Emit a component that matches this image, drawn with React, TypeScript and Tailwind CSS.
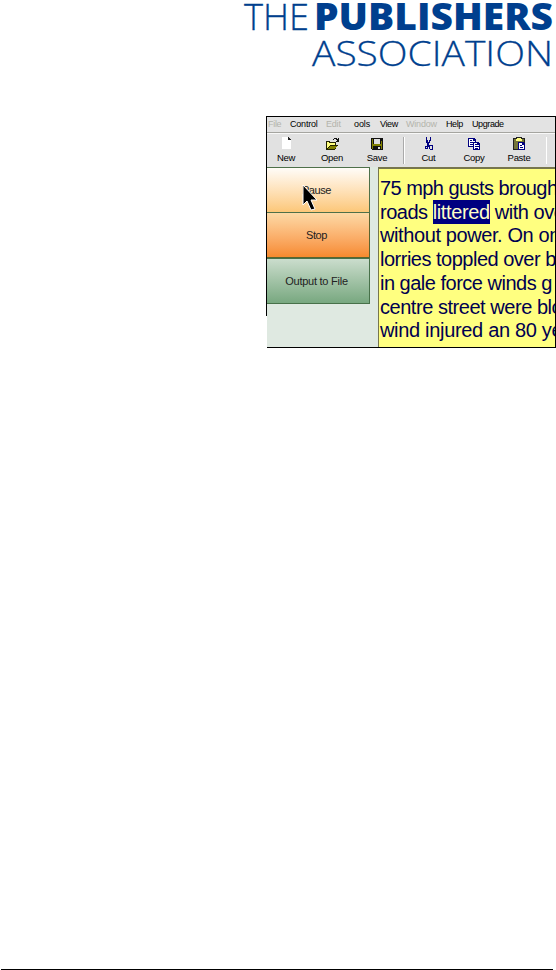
import type { ReactNode } from "react";

const menu: [string, string][] = [
  ["File", "w-[22px] text-[#b4b4ac] tracking-[-0.3px]"],
  ["Control", "w-[36px] text-black tracking-[-0.2px]"],
  ["Edit", "w-[28px] text-[#b4b4ac] tracking-[-0.2px]"],
  ["ools", "w-[26px] text-black tracking-[-0.1px]"],
  ["View", "w-[26px] text-black tracking-[-0.4px]"],
  ["Window", "w-[40px] text-[#b4b4ac] tracking-[-0.2px]"],
  ["Help", "w-[26px] text-black tracking-[-0.4px]"],
  ["Upgrade", "w-[40px] text-black tracking-[-0.4px]"],
];

const lines: [ReactNode, string][] = [
  ["75 mph gusts brough", "tracking-[-0.55px]"],
  [<>roads <span className="bg-[#000080] py-px text-[#ffffc8] tracking-[-0.38px]">littered</span> with ove</>, "tracking-[-0.48px]"],
  ["without power. On on", "tracking-[-0.4px]"],
  ["lorries toppled over b", "tracking-[-0.5px]"],
  ["in gale force winds g", "tracking-[-0.5px]"],
  ["centre street were blo", "tracking-[-0.46px]"],
  ["wind injured an 80 ye", "tracking-[-0.32px]"],
];

function Tool({ label, width, children }: { label: string; width: string; children: ReactNode }) {
  return (
    <div className={"flex shrink-0 flex-col items-center " + width}>
      <svg width="16" height="14" viewBox="0 0 16 14" shapeRendering="crispEdges">{children}</svg>
      <span className="mt-[1px] text-[9.5px] leading-[11px] tracking-[-0.3px]">{label}</span>
    </div>
  );
}

export default function App() {
  return (
    <div className="flex h-[970px] w-[556px] flex-col overflow-hidden bg-white font-['Liberation_Sans',Arial,sans-serif] text-black">
      <header className="h-[116px] shrink-0">
        <svg width="556" height="76" fill="#003f8e" fontFamily="'Open Sans', sans-serif">
          <text x="244" y="30" fontSize="37.5" fontWeight="300" stroke="#003f8e" strokeWidth="0.3" textLength="65" lengthAdjust="spacingAndGlyphs">THE</text>
          <text x="314" y="30" fontSize="37.5" fontWeight="800" textLength="239" lengthAdjust="spacingAndGlyphs">PUBLISHERS</text>
          <text x="312" y="66" fontSize="35.5" fontWeight="300" stroke="#003f8e" strokeWidth="0.3" textLength="241" lengthAdjust="spacingAndGlyphs">ASSOCIATION</text>
        </svg>
      </header>

      <main className="ml-[266px] flex h-[232px] w-[290px] shrink-0">
        <div className="h-[200px] w-px shrink-0 bg-black" />
        <div className="flex h-[232px] w-[289px] flex-col overflow-hidden border-y border-r border-black bg-[#dfe9e1]">
          <nav className="flex h-[16px] shrink-0 items-center whitespace-nowrap border-b border-[#a5a5a0] bg-[#e3e3e3] pl-[1px] text-[9px] leading-none">
            {menu.map(([label, style]) => <span key={label} className={"shrink-0 " + style}>{label}</span>)}
          </nav>
          <div className="flex h-[34px] shrink-0 border-t border-[#f8f8f8] bg-[#e1e1e1] pt-[3px]">
            <Tool label="New" width="w-[38px]">
              <path d="M4 0h6v3h3v9H4z" fill="#fff" /><path d="M10 0h1v1h1v1h1v1h-3z" fill="#222" />
            </Tool>
            <Tool label="Open" width="w-[54px]">
              <path d="M2 4h4v1h6v3h2l-3 5H2z" fill="#222200" /><path d="M3 5h2v1h6v2H6l-3 4z" fill="#ffff80" /><path d="M6 9h7l-2 3H4z" fill="#808000" /><path d="M9 2h1V1h3v1h1V1h1v4h-3V4h1V3h-1V2h-2v1H9z" fill="#111" />
            </Tool>
            <Tool label="Save" width="w-[36px]">
              <path d="M2 1h12v12H3v-1H2z" fill="#111" /><path d="M3 2h1v5h8V4h1v8H3z" fill="#808000" /><path d="M5 2h6v5H5z" fill="#ddd" /><path d="M4 9h8v4H4z" fill="#111" /><path d="M9 10h2v2H9z" fill="#ddd" />
            </Tool>
            <div className="ml-[8px] h-[27px] w-[2px] shrink-0 border-l border-[#aaa] bg-white" />
            <Tool label="Cut" width="w-[47px]">
              <path d="M5 0h1v3h1v2h1V3h1V0h1v4H9v2H8v2h4v5H9v-1H8v-2H7v2H4V9h2V6H5zM5 10v1h1v-1zM9 9v3h2V9z" fill="#000080" fillRule="evenodd" />
            </Tool>
            <Tool label="Copy" width="w-[44px]">
              <path d="M2 1h6l2 2v2h2l2 2v6H7v-3H2z" fill="#000080" /><path d="M3 2h4v2h2v1H7v4H3zM8 6h3v2h2v4H8z" fill="#fff" /><path d="M4 3h2v1H4zM4 5h3v1H4zM4 7h3v1H4zM9 7h2v1H9zM9 9h4v1H9zM9 11h3v1H9z" fill="#000080" />
            </Tool>
            <Tool label="Paste" width="w-[46px]">
              <path d="M2 1h3V0h6v1h3v12H2z" fill="#222" /><path d="M3 2h10v10H3z" fill="#74743a" /><path d="M5 2h1V1h4v1h1v2H5z" fill="#ffff80" /><path d="M7 5h5l2 2v6H7z" fill="#000080" /><path d="M8 6h3v2h2v4H8z" fill="#fff" /><path d="M9 8h2v1H9zM9 10h3v1H9z" fill="#000080" />
            </Tool>
            <div className="ml-[4px] h-[27px] w-px shrink-0 bg-white" />
          </div>
          <div className="flex min-h-0 grow">
            <div className="relative flex w-[103px] shrink-0 flex-col text-[11px] tracking-[-0.4px] text-[#222]">
              <div className="flex h-[46px] items-center justify-center border-y border-r border-[#4e7049] bg-linear-to-b from-[#fffcf8] to-[#fcc778] pr-[3px]">Pause</div>
              <div className="flex h-[45px] items-center justify-center border-r border-b border-[#59642f] bg-linear-to-b from-[#fcd9a5] to-[#f68a2d] pt-px pr-[3px]">Stop</div>
              <div className="flex h-[46px] items-center justify-center border-y border-r border-[#477149] bg-linear-to-b from-[#cbddcd] to-[#78a880] pt-px pr-[3px] tracking-[-0.25px]">Output to File</div>
              <svg className="absolute top-[17px] left-[35px]" width="16" height="29" viewBox="0 0 16 29">
                <path d="M1 1v20l4-4 4 9 4-1-4-9h6z" fill="#000" stroke="#fff" strokeWidth="1" />
              </svg>
            </div>
            <div className="ml-[8px] grow overflow-hidden border-t-2 border-l border-[#77764d] bg-[#ffff80] pt-[8px] pl-[1px] text-[20px] leading-[23.7px] text-[#000050]">
              {lines.map(([text, style], i) => <div key={i} className={"whitespace-nowrap " + style}>{text}</div>)}
            </div>
          </div>
        </div>
      </main>
      <div className="grow" />
      <div className="ml-[1px] h-px w-[552px] shrink-0 bg-black" />
    </div>
  );
}
